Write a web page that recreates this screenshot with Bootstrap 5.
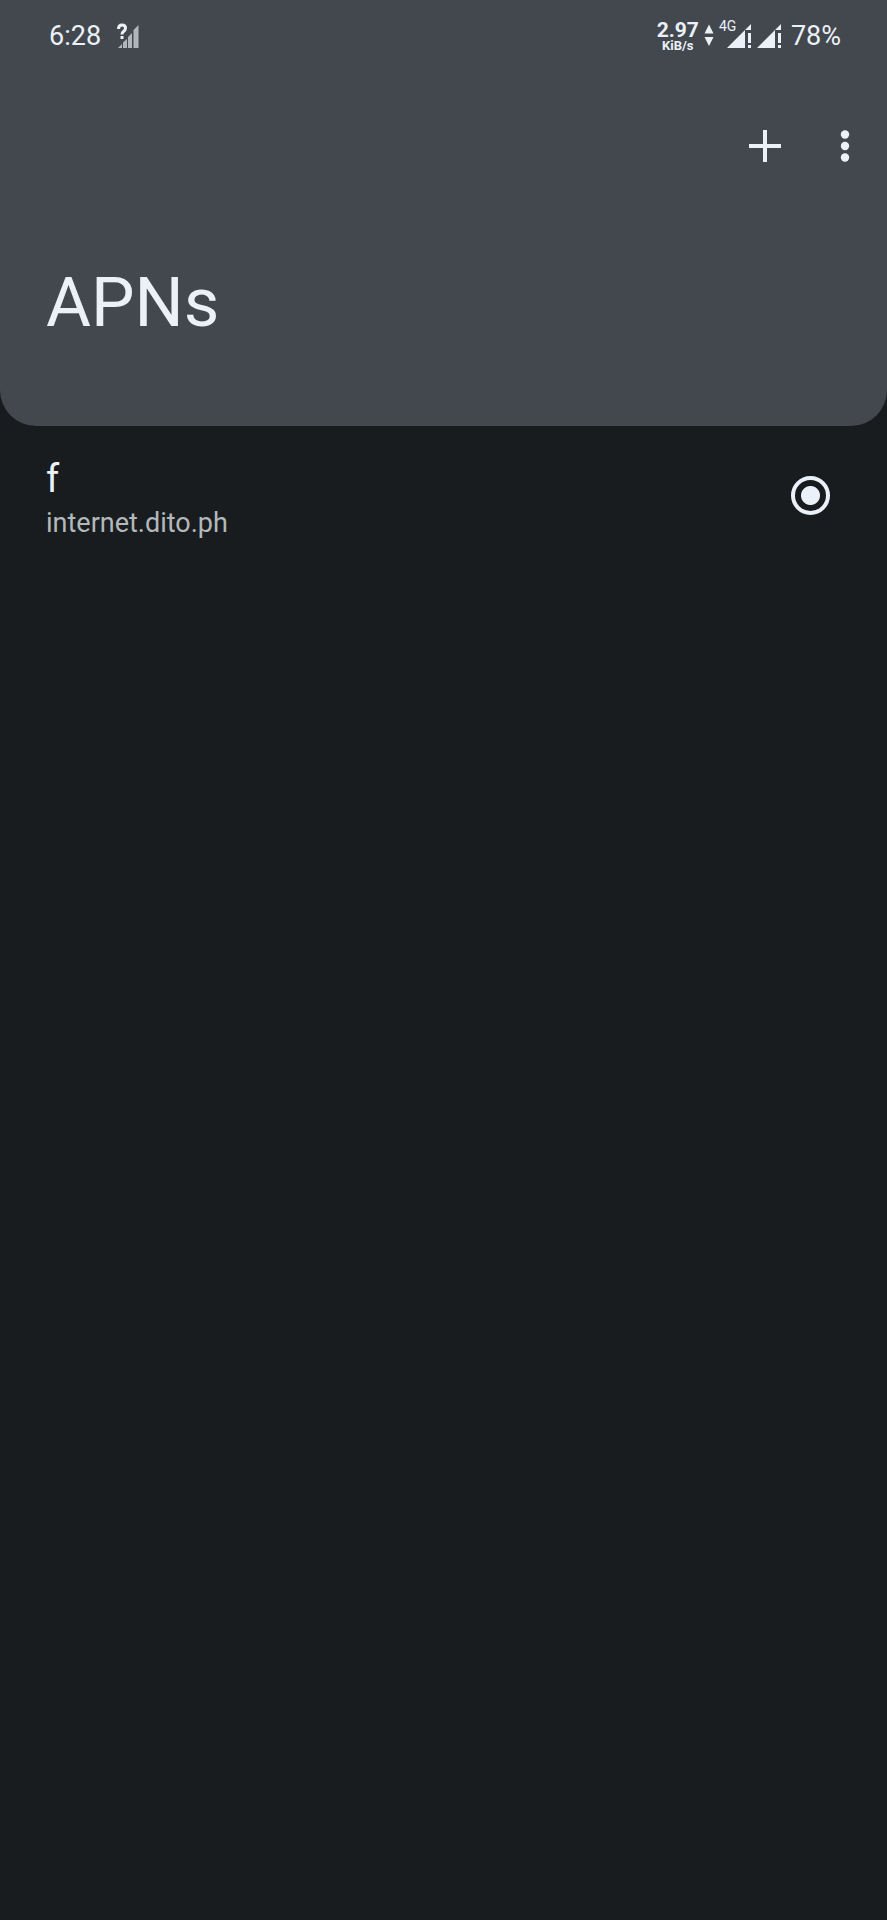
<!DOCTYPE html>
<html lang="en">
<head>
<meta charset="utf-8">
<meta name="viewport" content="width=device-width, initial-scale=1">
<title>APNs</title>
<link href="https://cdn.jsdelivr.net/npm/bootstrap@5.3.0/dist/css/bootstrap.min.css" rel="stylesheet">
<style>
  :root { --ink: #ebf1f8; --panel: #43484e; --page: #181c1f; }
  body { background: var(--page); color: var(--ink); font-family: Roboto, "Liberation Sans", sans-serif; }
  svg { display: block; fill: currentColor; flex: none; }
  .top-panel { background: var(--panel); border-radius: 0 0 36px 36px; padding-bottom: 83px; }
  .status-bar { height: 72px; padding: 0 46px 0 49px; font-size: 27px; line-height: 32px; }
  .net-speed { font-size: 21px; line-height: 19px; font-weight: 700; }
  .net-unit { font-size: 13px; line-height: 12px; font-weight: 700; }
  .net-type { font-size: 14px; line-height: 14px; left: -8px; top: -4px; }
  .tool-bar { height: 148px; padding: 0 12px; gap: 20px; }
  .tool-btn { width: 60px; height: 60px; color: var(--ink); background: none; border: 0; padding: 0; }
  .page-title { font-size: 69px; line-height: 80px; font-weight: 400; padding: 0 46px; margin: 43px 0 0; }
  .apn-row { padding: 29px 57px 20px 46px; cursor: pointer; }
  .apn-name { font-size: 38px; line-height: 48px; }
  .apn-host { font-size: 27px; line-height: 40px; color: #b3b8bb; }
  .apn-pick { appearance: none; width: 39px; height: 39px; margin: 0 0 8px; border: 4px solid var(--ink); border-radius: 50%;
    background: transparent; }
  .apn-pick:checked { background: radial-gradient(circle, var(--ink) 9px, transparent 10px); }
</style>
</head>
<body>
<header class="top-panel">
  <div class="status-bar d-flex justify-content-between align-items-center">
    <div class="d-flex align-items-center gap-3">
      <span>6:28</span>
      <svg width="24" height="26" viewBox="0 0 24 26" aria-label="Unknown signal">
        <path d="M1.500 6Q1.500 2 5 2Q8.500 2 8.500 5Q8.500 7 6.500 8.500Q5 9.500 5 11.500" fill="none" stroke="currentColor" stroke-width="3"/>
        <rect x="3.500" y="13" width="3" height="3"/>
        <g opacity=".65"><path d="M1 25 5 21V25ZM6 19.500 10 16V25H6ZM11 14 15 10V25H11ZM16.500 7 21.500 2V25H16.500Z"/></g>
      </svg>
    </div>
    <div class="d-flex align-items-center">
      <div class="d-flex flex-column align-items-center">
        <span class="net-speed">2.97</span>
        <span class="net-unit">KiB/s</span>
      </div>
      <svg class="ms-1" width="12" height="24" viewBox="0 0 12 24" aria-label="Data activity"><path d="M6 .5 10.500 9.500H1.500ZM6 22 1.500 13H10.500Z"/></svg>
      <div class="position-relative ms-2 ps-1">
        <span class="net-type position-absolute ms-1">4G</span>
        <svg width="26" height="26" viewBox="0 0 26 26" aria-label="SIM 1 signal"><path d="M0 25 18 7V25ZM18 7 24 1V7ZM21 10H24V20H21ZM21 22H24V25H21Z"/></svg>
      </div>
      <svg class="ms-1" width="26" height="26" viewBox="0 0 26 26" aria-label="SIM 2 signal"><path d="M0 25 18 7V25ZM18 7 24 1V7ZM21 10H24V20H21ZM21 22H24V25H21Z"/></svg>
      <span class="ms-2">78%</span>
    </div>
  </div>
  <div class="tool-bar d-flex justify-content-end align-items-center">
    <button type="button" class="tool-btn d-flex align-items-center justify-content-center" aria-label="Add APN">
      <svg width="32" height="32" viewBox="0 0 32 32"><path d="M14 0H18V14H32V18H18V32H14V18H0V14H14Z"/></svg>
    </button>
    <button type="button" class="tool-btn d-flex align-items-center justify-content-center" aria-label="More options">
      <svg width="10" height="32" viewBox="0 0 10 32"><circle cx="5" cy="4.500" r="4.200"/><circle cx="5" cy="16" r="4.200"/><circle cx="5" cy="27.500" r="4.200"/></svg>
    </button>
  </div>
  <h1 class="page-title">APNs</h1>
</header>
<main>
  <label class="apn-row d-flex align-items-center justify-content-between" for="apn-f">
    <span class="d-flex flex-column">
      <span class="apn-name">f</span>
      <span class="apn-host">internet.dito.ph</span>
    </span>
    <input class="apn-pick" type="radio" name="apn" id="apn-f" checked>
  </label>
</main>
<script src="https://cdn.jsdelivr.net/npm/bootstrap@5.3.0/dist/js/bootstrap.bundle.min.js"></script>
</body>
</html>
